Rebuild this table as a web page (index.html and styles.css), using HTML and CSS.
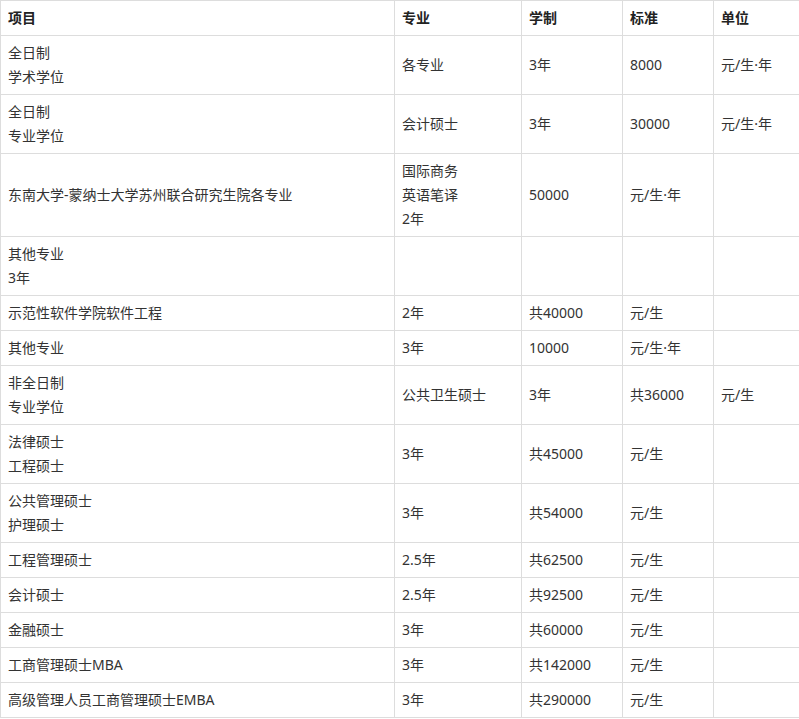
FILE: index.html
```html
<!DOCTYPE html>
<html lang="zh-CN">
<head>
<meta charset="utf-8">
<title>收费标准</title>
<link rel="stylesheet" href="styles.css">
</head>
<body>
<table class="fees">
  <colgroup>
    <col class="c1"><col class="c2"><col class="c3"><col class="c4"><col class="c5">
  </colgroup>
  <thead>
    <tr><th>项目</th><th>专业</th><th>学制</th><th>标准</th><th>单位</th></tr>
  </thead>
  <tbody>
    <tr><td>全日制<br>学术学位</td><td>各专业</td><td>3年</td><td>8000</td><td>元/生·年</td></tr>
    <tr><td>全日制<br>专业学位</td><td>会计硕士</td><td>3年</td><td>30000</td><td>元/生·年</td></tr>
    <tr><td>东南大学-蒙纳士大学苏州联合研究生院各专业</td><td>国际商务<br>英语笔译<br>2年</td><td>50000</td><td>元/生·年</td><td></td></tr>
    <tr><td>其他专业<br>3年</td><td></td><td></td><td></td><td></td></tr>
    <tr><td>示范性软件学院软件工程</td><td>2年</td><td>共40000</td><td>元/生</td><td></td></tr>
    <tr><td>其他专业</td><td>3年</td><td>10000</td><td>元/生·年</td><td></td></tr>
    <tr><td>非全日制<br>专业学位</td><td>公共卫生硕士</td><td>3年</td><td>共36000</td><td>元/生</td></tr>
    <tr><td>法律硕士<br>工程硕士</td><td>3年</td><td>共45000</td><td>元/生</td><td></td></tr>
    <tr><td>公共管理硕士<br>护理硕士</td><td>3年</td><td>共54000</td><td>元/生</td><td></td></tr>
    <tr><td>工程管理硕士</td><td>2.5年</td><td>共62500</td><td>元/生</td><td></td></tr>
    <tr><td>会计硕士</td><td>2.5年</td><td>共92500</td><td>元/生</td><td></td></tr>
    <tr><td>金融硕士</td><td>3年</td><td>共60000</td><td>元/生</td><td></td></tr>
    <tr><td>工商管理硕士MBA</td><td>3年</td><td>共142000</td><td>元/生</td><td></td></tr>
    <tr><td>高级管理人员工商管理硕士EMBA</td><td>3年</td><td>共290000</td><td>元/生</td><td></td></tr>
  </tbody>
</table>
</body>
</html>
```
FILE: styles.css
```css
html, body {
  margin: 0;
  padding: 0;
  background: #fff;
}
body {
  overflow: hidden;
  font-family: "Noto Sans", "Noto Sans CJK SC", sans-serif;
  font-size: 14px;
  color: #333;
}
.fees {
  border-collapse: collapse;
  table-layout: fixed;
  width: 801px;
}
.fees .c1 { width: 394px; }
.fees .c2 { width: 127px; }
.fees .c3 { width: 101px; }
.fees .c4 { width: 91px; }
.fees .c5 { width: 88px; }
.fees th,
.fees td {
  border: 1px solid #ddd;
  padding: 5px 7px;
  line-height: 24px;
  text-align: left;
  vertical-align: middle;
  white-space: nowrap;
}
.fees th {
  font-weight: bold;
  color: #222;
}
```
